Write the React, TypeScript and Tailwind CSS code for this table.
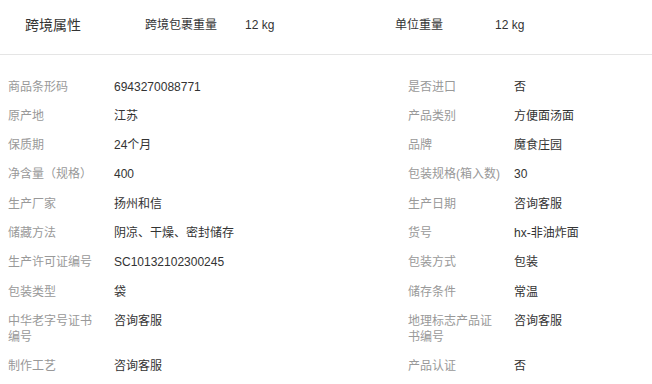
const font = { fontFamily: '"Liberation Sans", "Noto Sans CJK SC", sans-serif' };

const rows: [string, string, string, string][] = [
  ['商品条形码', '6943270088771', '是否进口', '否'],
  ['原产地', '江苏', '产品类别', '方便面汤面'],
  ['保质期', '24个月', '品牌', '魔食庄园'],
  ['净含量（规格）', '400', '包装规格(箱入数)', '30'],
  ['生产厂家', '扬州和信', '生产日期', '咨询客服'],
  ['储藏方法', '阴凉、干燥、密封储存', '货号', 'hx-非油炸面'],
  ['生产许可证编号', 'SC10132102300245', '包装方式', '包装'],
  ['包装类型', '袋', '储存条件', '常温'],
  ['中华老字号证书编号', '咨询客服', '地理标志产品证书编号', '咨询客服'],
  ['制作工艺', '咨询客服', '产品认证', '否'],
];

function Cell({ label, value }: { label: string; value: string }) {
  return (
    <div className="flex w-[400px] shrink-0 items-start">
      <div className="w-[92px] mr-[14px] shrink-0 text-[#999]">{label}</div>
      <div className="flex-1 text-[#333]">{value}</div>
    </div>
  );
}

export default function App() {
  return (
    <div className="w-[652px] h-[384px] bg-white overflow-hidden" style={font}>
      <div className="h-[55px] flex items-center pb-[5px] border-b border-[#e5e5e5] text-[#333] text-xs leading-[16px]">
        <div className="w-[145px] shrink-0 pl-[25px] text-sm leading-[16px]">跨境属性</div>
        <div className="w-[100px] shrink-0">跨境包裹重量</div>
        <div className="w-[150px] shrink-0">12 kg</div>
        <div className="w-[100px] shrink-0">单位重量</div>
        <div>12 kg</div>
      </div>
      <div className="pt-[16.5px] pl-[8px] text-xs leading-[16px]">
        {rows.map((r) => (
          <div key={r[0]} className="flex pt-[7px] pb-[6.3px]">
            <Cell label={r[0]} value={r[1]} />
            <Cell label={r[2]} value={r[3]} />
          </div>
        ))}
      </div>
    </div>
  );
}
